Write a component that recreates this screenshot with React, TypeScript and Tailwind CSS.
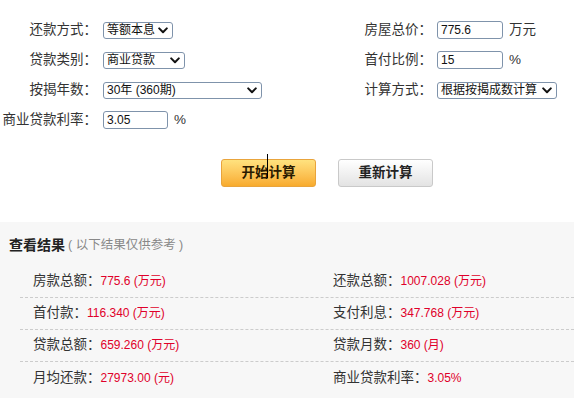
import React from 'react';

const font = { fontFamily: '"Liberation Sans", Arial, "Noto Sans CJK SC", sans-serif' };

const Chevron = () => (
  <svg width="10" height="7" viewBox="0 0 10 7" className="shrink-0">
    <path d="M1.2 1.4 L5 5.2 L8.8 1.4" fill="none" stroke="#111" strokeWidth="2" strokeLinecap="round" strokeLinejoin="round" />
  </svg>
);

const Select = ({ value, w }: { value: string; w: string }) => (
  <div className={`${w} h-[17px] flex items-center justify-between pl-[3px] pr-[4px] border border-[#7f93ab] rounded-[3px] bg-white text-[12px] text-[#111] leading-none`}>
    <span className="whitespace-nowrap">{value}</span>
    <Chevron />
  </div>
);

const Input = ({ value, w }: { value: string; w: string }) => (
  <div className={`${w} h-[18px] flex items-center pl-[3px] border border-[#7f93ab] rounded-[3px] bg-white text-[12px] text-[#111] leading-none`}>
    {value}
  </div>
);

const Row = ({ children }: { children: React.ReactNode }) => (
  <div className="h-[30px] flex items-center whitespace-nowrap">{children}</div>
);

const results: [string, string, string, string][] = [
  ['房款总额：', '775.6 (万元)', '还款总额：', '1007.028 (万元)'],
  ['首付款：', '116.340 (万元)', '支付利息：', '347.768 (万元)'],
  ['贷款总额：', '659.260 (万元)', '贷款月数：', '360 (月)'],
  ['月均还款：', '27973.00 (元)', '商业贷款利率：', '3.05%'],
];

export default function App() {
  return (
    <div className="w-[574px] h-[398px] overflow-hidden bg-white text-[13.5px] text-[#333]" style={font}>
      {/* form */}
      <div className="flex pt-[15px]">
        <div className="w-[362px]">
          <Row>
            <span className="w-[97px] text-right">还款方式：</span>
            <div className="ml-[6px]"><Select value="等额本息" w="w-[70px]" /></div>
          </Row>
          <Row>
            <span className="w-[97px] text-right">贷款类别：</span>
            <div className="ml-[6px]"><Select value="商业贷款" w="w-[82px]" /></div>
          </Row>
          <Row>
            <span className="w-[97px] text-right">按揭年数：</span>
            <div className="ml-[6px]"><Select value="30年 (360期)" w="w-[159px]" /></div>
          </Row>
          <Row>
            <span className="w-[97px] text-right">商业贷款利率：</span>
            <div className="ml-[6px]"><Input value="3.05" w="w-[65px]" /></div>
            <span className="ml-[6px]">%</span>
          </Row>
        </div>
        <div>
          <Row>
            <span className="w-[70px] text-right">房屋总价：</span>
            <div className="ml-[5px]"><Input value="775.6" w="w-[66px]" /></div>
            <span className="ml-[6px]">万元</span>
          </Row>
          <Row>
            <span className="w-[70px] text-right">首付比例：</span>
            <div className="ml-[5px]"><Input value="15" w="w-[66px]" /></div>
            <span className="ml-[6px]">%</span>
          </Row>
          <Row>
            <span className="w-[70px] text-right">计算方式：</span>
            <div className="ml-[5px]"><Select value="根据按揭成数计算" w="w-[120px]" /></div>
          </Row>
        </div>
      </div>

      {/* buttons */}
      <div className="flex gap-[22px] pl-[221px] mt-[24px]">
        <div className="relative w-[95px] h-[28px] flex items-center justify-center rounded-[3px] border border-[#e9a43c] bg-gradient-to-b from-[#ffe27e] to-[#f8ab2c] font-bold text-[#2a1a00] text-[13.5px]">
          开始计算
          <span className="absolute left-[45px] top-[-6px] w-px h-[24px] bg-black" />
        </div>
        <div className="w-[95px] h-[28px] flex items-center justify-center rounded-[3px] border border-[#c9c9c9] bg-gradient-to-b from-[#ffffff] to-[#e3e3e3] font-bold text-[#222] text-[13.5px]">
          重新计算
        </div>
      </div>

      {/* results */}
      <div className="mt-[35px] h-[176px] bg-[#f7f7f7] pt-[14px]">
        <div className="h-[18px] flex items-center pl-[9px] whitespace-nowrap">
          <span className="font-bold text-[#222] text-[14px]">查看结果</span>
          <span className="ml-[3px] text-[#888] text-[12.5px]">( 以下结果仅供参考 )</span>
        </div>
        <div className="mt-[12px] ml-[20px]">
          {results.map(([l1, v1, l2, v2], i) => (
            <div
              key={l1}
              className={`h-[32px] grid grid-cols-[313px_1fr] items-center ${i < results.length - 1 ? 'border-b border-dashed border-[#cccccc]' : ''}`}
            >
              <div className="pl-[13px] whitespace-nowrap">
                {l1}<span className="text-[#e0002a] text-[12px]">{v1}</span>
              </div>
              <div className="whitespace-nowrap">
                {l2}<span className="text-[#e0002a] text-[12px]">{v2}</span>
              </div>
            </div>
          ))}
        </div>
      </div>
    </div>
  );
}
